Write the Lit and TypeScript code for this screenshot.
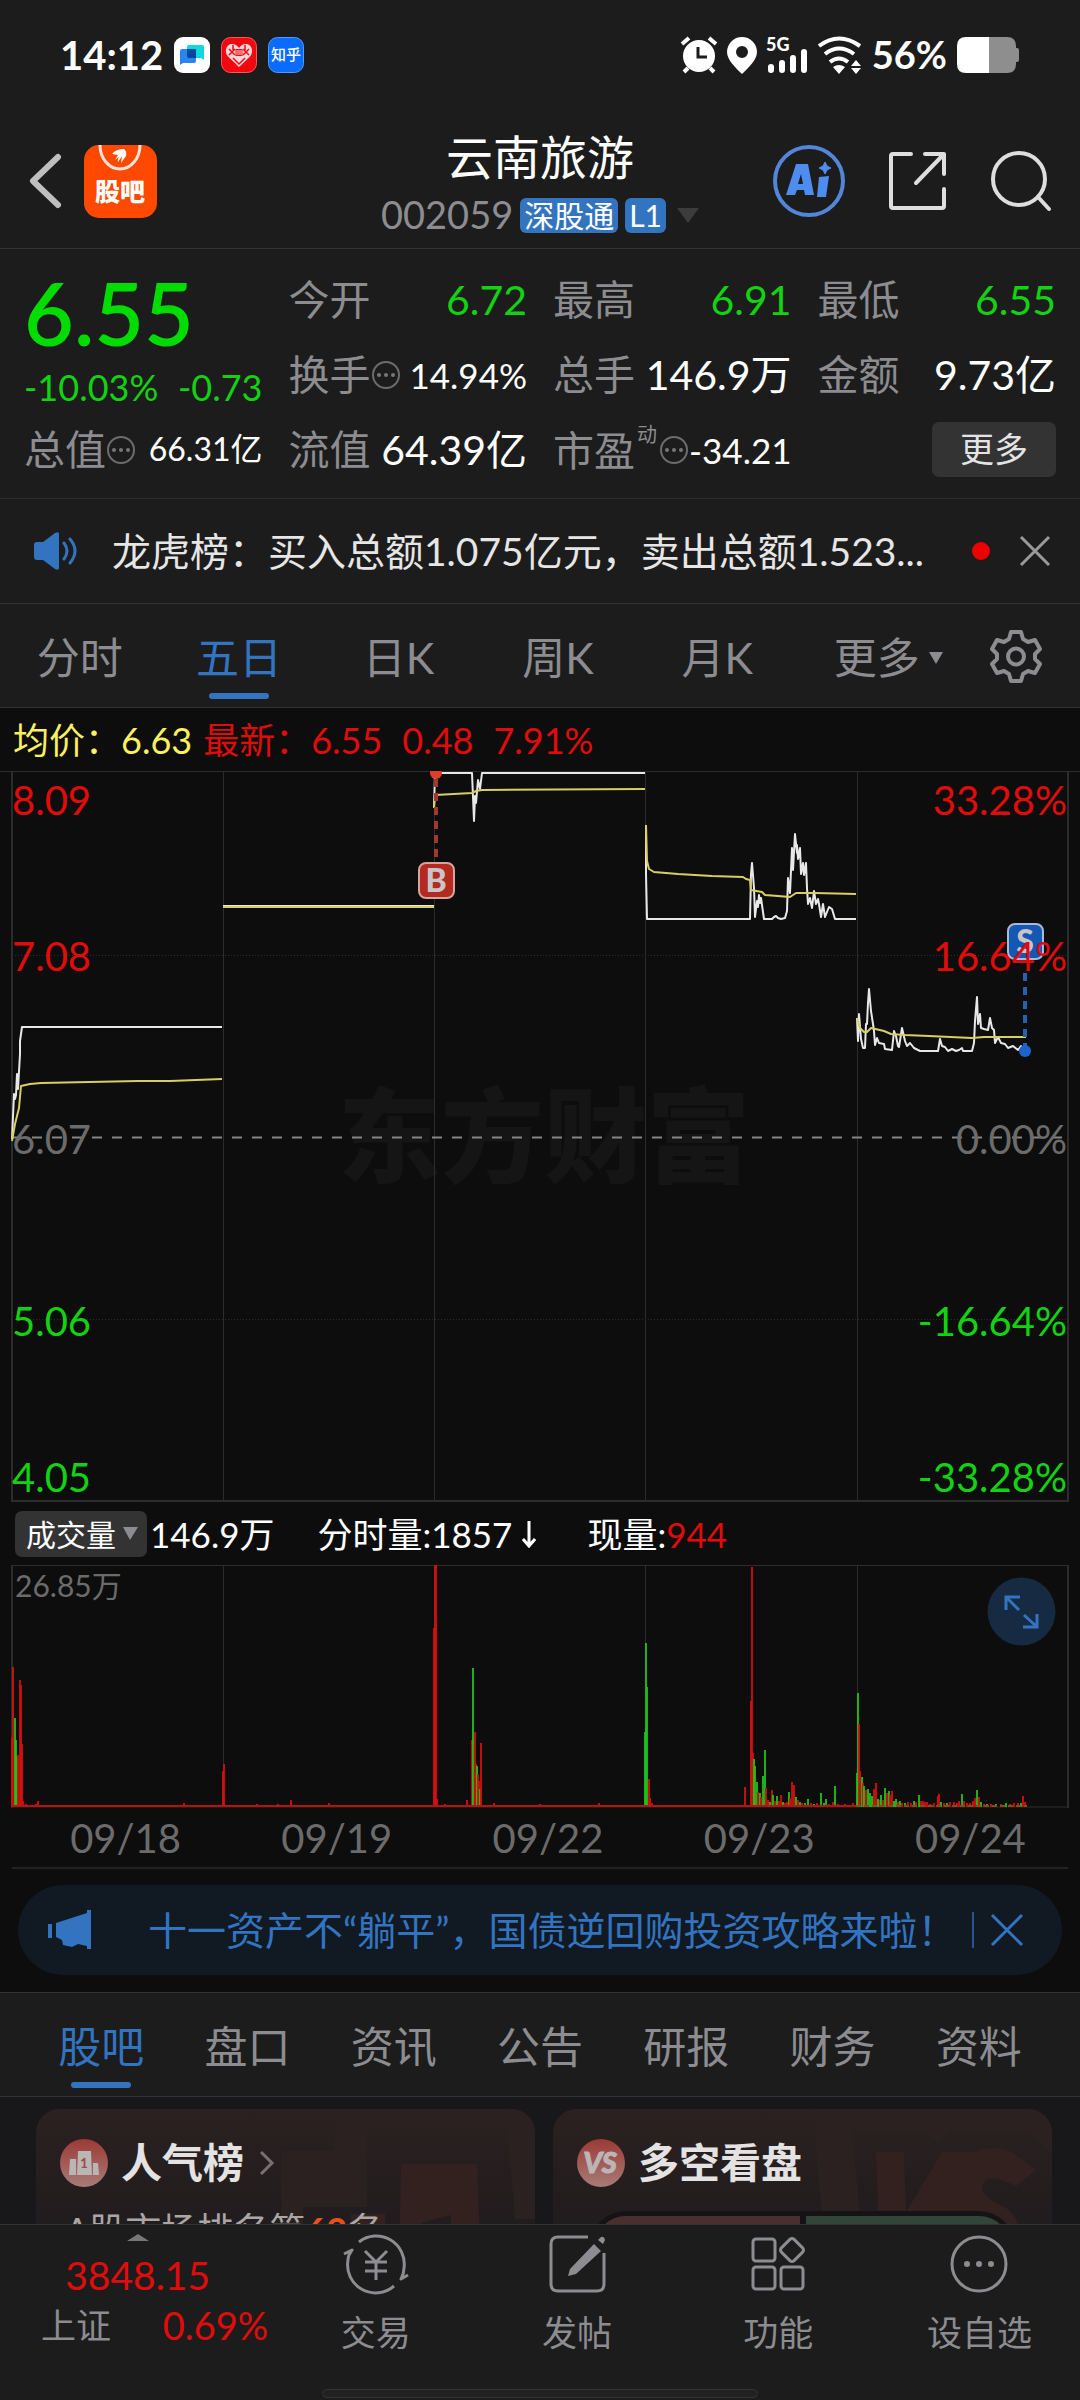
import { LitElement, html, svg, css } from "lit";
import { customElement, state } from "lit/decorators.js";
import { classMap } from "lit/directives/class-map.js";

type Bar = [x: number, height: number, up: 0 | 1];

const PRICE_LINES = [
  "12,368 14,323 15,328 16,324 17,303 18,318 20,283 20,270 22,256 222,256",
  "223,135 434,135",
  "434,37 435,2 472,2 474,50 475,25 476,32 478,9 480,18 482,2 645,2",
  "646,54 646,103 647,148 750,148 751,103 752,92 754,117 755,146 757,130 758,136 759,124 760,132 761,127 763,141 764,148 772,148 774,146 776,145 778,147 781,148 785,147 787,140 788,107 790,122 792,77 793,99 795,63 797,82 797,74 798,88 800,77 801,103 803,92 804,104 806,92 807,117 808,133 810,127 812,137 814,120 816,133 818,128 819,133 821,146 823,133 825,146 829,136 832,138 835,148 856,148",
  "857,247 858,270 859,243 861,268 863,277 865,277 866,253 867,253 868,232 869,218 871,240 873,253 874,260 875,274 877,267 879,272 884,273 885,278 892,279 894,260 896,265 898,275 899,276 902,257 905,270 907,275 910,272 914,277 920,280 938,280 940,268 942,275 945,276 948,280 952,278 956,280 959,279 962,277 963,280 972,280 974,272 975,250 977,226 978,253 980,243 981,257 984,258 988,259 990,247 992,257 994,259 995,272 998,266 1001,272 1005,273 1008,277 1013,275 1018,279 1021,275 1025,280",
];

const AVERAGE_LINES = [
  "12,370 15,353 19,337 21,315 30,313 41,312 138,310 170,310 222,308",
  "223,136 434,136",
  "434,37 435,24 472,22 476,20 482,19 645,18",
  "646,54 647,90 649,98 654,101 678,103 712,105 743,106 746,108 750,109 751,119 762,121 765,124 778,125 790,126 796,122 815,122 856,123",
  "857,247 860,257 864,261 867,261 871,257 884,260 891,263 905,264 929,265 972,267 984,266 1026,266",
];

const BARS: Bar[] = [
  [12, 70, 1], [13, 140, 1], [15, 89, 0], [16, 67, 0], [17, 50, 0], [18, 52, 1], [20, 127, 1], [21, 122, 1], [22, 63, 1], [23, 6, 1],
  [26, 3, 1], [36, 3, 1], [38, 6, 1], [118, 2, 1], [184, 4, 1],
  [223, 36, 1], [224, 43, 1], [257, 3, 1], [278, 3, 1], [291, 7, 1], [329, 4, 1],
  [434, 179, 1], [435, 242, 1], [436, 242, 1], [437, 8, 1], [445, 3, 1], [467, 7, 1],
  [472, 67, 1], [475, 75, 1], [473, 139, 0], [476, 43, 1], [477, 41, 0], [478, 32, 1], [479, 26, 1], [480, 18, 0], [481, 64, 1],
  [494, 4, 1], [540, 3, 1], [599, 4, 1],
  [645, 75, 0], [646, 164, 0], [647, 120, 0], [649, 28, 1], [650, 9, 1], [652, 4, 1], [745, 20, 1],
  [751, 106, 1], [752, 240, 1], [753, 54, 1], [754, 48, 0], [755, 41, 0], [757, 25, 0], [758, 15, 1], [760, 14, 0], [761, 10, 1],
  [763, 31, 0], [765, 57, 0], [766, 19, 1], [768, 7, 1], [770, 5, 0], [772, 17, 1], [773, 12, 0], [775, 6, 1], [777, 11, 0],
  [779, 6, 1], [781, 12, 1], [783, 5, 0], [785, 4, 1], [787, 5, 1], [789, 15, 0], [790, 8, 1], [792, 25, 1], [794, 22, 1], [796, 10, 0],
  [798, 7, 1], [800, 5, 0], [802, 4, 1], [805, 4, 0], [808, 8, 0], [811, 4, 1], [814, 3, 0], [817, 4, 1], [821, 14, 0], [824, 4, 0],
  [826, 8, 0], [829, 3, 1], [833, 5, 1], [835, 21, 0], [838, 3, 1], [845, 3, 1], [853, 4, 1],
  [857, 34, 0], [858, 114, 0], [859, 83, 1], [860, 36, 1], [862, 30, 0], [863, 24, 1], [864, 21, 0], [866, 17, 1], [868, 18, 0],
  [870, 14, 0], [872, 11, 0], [874, 18, 1], [876, 24, 1], [878, 8, 0], [880, 7, 1], [881, 12, 0], [883, 7, 1], [885, 19, 0], [887, 14, 1],
  [889, 16, 0], [890, 12, 1], [892, 16, 1], [894, 6, 0], [896, 8, 0], [898, 5, 1], [900, 6, 0], [902, 4, 1], [905, 4, 0], [908, 5, 1],
  [911, 4, 1], [914, 6, 0], [916, 5, 1], [919, 12, 0], [921, 6, 1], [923, 6, 1], [925, 5, 1], [927, 5, 1], [930, 3, 1], [934, 4, 1],
  [938, 11, 1], [939, 13, 1], [941, 5, 0], [944, 4, 1], [947, 4, 0], [950, 5, 1], [954, 5, 1], [957, 4, 1], [959, 6, 1], [962, 13, 0],
  [964, 6, 1], [967, 4, 1], [970, 4, 1], [973, 6, 1], [975, 9, 1], [977, 17, 0], [979, 10, 1], [981, 5, 0], [984, 3, 1], [987, 3, 0],
  [991, 3, 1], [996, 3, 0], [1001, 3, 1], [1006, 4, 0], [1010, 3, 1], [1014, 4, 1], [1018, 4, 1], [1021, 4, 0], [1023, 11, 1], [1025, 5, 1],
];

const GRID_X = [223, 434, 645, 857];

const sharedStyles = css`
  *,
  *::before,
  *::after {
    box-sizing: border-box;
  }
  button,
  select {
    font: inherit;
    color: inherit;
    background: none;
    border: 0;
    padding: 0;
    margin: 0;
    cursor: pointer;
    appearance: none;
  }
  a {
    color: inherit;
    text-decoration: none;
  }
  svg {
    display: block;
    flex: none;
  }
  .up {
    color: #e00c0c;
  }
  .down {
    color: #12d212;
  }
`;

@customElement("phone-status")
class PhoneStatus extends LitElement {
  static styles = [
    sharedStyles,
    css`
      :host {
        display: flex;
        align-items: center;
        justify-content: space-between;
        height: 110px;
        padding: 0 60px;
        color: #fff;
      }
      .side {
        display: flex;
        align-items: center;
        gap: 11px;
      }
      .status {
        gap: 9px;
      }
      .clock {
        font-size: 40px;
        font-weight: 700;
      }
      .percent {
        font-size: 38px;
        font-weight: 700;
      }
    `,
  ];

  render() {
    return html`
      <div class="side">
        <span class="clock">14:12</span>
        <svg width="36" height="36" viewBox="0 0 36 36">
          <rect width="36" height="36" rx="9" fill="#fff" />
          <path d="M15 8h13a2 2 0 0 1 2 2v13l-3-2H15a2 2 0 0 1-2-2v-9a2 2 0 0 1 2-2z" fill="#0fd9dc" />
          <path d="M8 12h14v12a2 2 0 0 1-2 2H9l-3 2V14a2 2 0 0 1 2-2z" fill="#2a85f2" />
          <path d="M13 12h9v9h-7a2 2 0 0 1-2-2z" fill="#04479c" />
        </svg>
        <svg width="36" height="36" viewBox="0 0 36 36">
          <rect x="0.5" y="0.5" width="35" height="35" rx="9" fill="#f2070f" stroke="#f8575c" />
          <path d="M18 30 6.500 19C3 14 5.500 7 11 7c3.500 0 5.500 2 7 4 1.500-2 3.500-4 7-4 5.500 0 8 7 4.500 12z" fill="#ffd9da" />
          <path d="M8 12l6 6m-6 0 6-6m8 0 6 6m0-6-6 6M12 21l6 6 6-6M12 8v5m12-5v5" stroke="#f2070f" stroke-width="1.500" fill="none" />
          <rect x="14.500" y="12" width="7" height="7" fill="#f2070f" />
          <path d="M16 13v5m2-5v5m2-5v5" stroke="#ffd9da" />
        </svg>
        <svg width="36" height="36" viewBox="0 0 36 36">
          <rect x="0.5" y="0.5" width="35" height="35" rx="9" fill="#0a6cff" stroke="#4f9bff" />
          <text x="18" y="23" font-size="15" font-weight="500" text-anchor="middle" fill="#fff">知乎</text>
        </svg>
      </div>
      <div class="side status">
        <svg width="38" height="38" viewBox="0 0 38 38" fill="none" stroke="#fff" stroke-width="4">
          <circle cx="19" cy="20" r="16" fill="#fff" stroke="none" />
          <path d="M2 8 9 2M36 8 29 2M8 32l-4 4M30 32l4 4" />
          <path d="M18 11v10h9" stroke="#1c1c1c" stroke-width="3" />
        </svg>
        <svg width="30" height="38" viewBox="0 0 30 38">
          <path fill="#fff" fill-rule="evenodd" d="M15 1a15 15 0 0 1 15 15c0 8-9 16-15 22C9 32 0 24 0 16A15 15 0 0 1 15 1zm0 9a6 6 0 1 0 0 12 6 6 0 0 0 0-12z" />
        </svg>
        <svg width="42" height="38" viewBox="0 0 42 38" overflow="visible" stroke="#fff" stroke-width="6" stroke-linecap="round">
          <text x="0" y="15" font-size="18" font-weight="900" fill="#fff" stroke="none">5G</text>
          <path d="M5 31v3M16 27v7M27 22v12M38 16v18" />
        </svg>
        <svg width="46" height="38" viewBox="0 0 46 38" fill="none" stroke="#fff" stroke-width="4">
          <path d="M2 10q20-15 41 0M8 18q14-11 29 0M13 26q9-7 18 0" />
          <path d="m22 38-6-7q6-4 12 0zM39 24l5 6h-10zM39 38l5-6h-10z" fill="#fff" stroke="none" />
        </svg>
        <span class="percent">56%</span>
        <svg width="64" height="38" viewBox="0 0 64 38">
          <path d="M33 1h18q9 0 9 9v2h1q2 0 2 2v10q0 2-2 2h-1v2q0 9-9 9H33z" fill="#8e8e8e" />
          <path d="M33 1H10Q1 1 1 10v18q0 9 9 9h23z" fill="#fff" />
        </svg>
      </div>
    `;
  }
}

@customElement("stock-header")
class StockHeader extends LitElement {
  static styles = [
    sharedStyles,
    css`
      :host {
        display: grid;
        grid-template-columns: 1fr auto 1fr;
        align-items: center;
        height: 139px;
        padding: 4px 28px 0;
        border-bottom: 1px solid #333;
      }
      .left,
      .right,
      .code {
        display: flex;
        align-items: center;
      }
      .left {
        gap: 22px;
      }
      .right {
        justify-content: flex-end;
        gap: 42px;
      }
      .middle {
        padding-top: 8px;
        text-align: center;
      }
      h1 {
        margin: 0;
        font-size: 47px;
        line-height: 60px;
        font-weight: 400;
        color: #fff;
      }
      .code {
        justify-content: center;
        gap: 7px;
        height: 56px;
        font-size: 38px;
        color: #8c8c91;
      }
      .badge {
        height: 35px;
        padding: 0 4px;
        border-radius: 6px;
        background: #3274c0;
        color: #fff;
        font-size: 30px;
        line-height: 34px;
      }
      .caret {
        margin-left: 4px;
      }
    `,
  ];

  render() {
    return html`
      <div class="left">
        <button aria-label="返回">
          <svg width="34" height="56" viewBox="0 0 34 56" fill="none" stroke="#bfbfbf" stroke-width="6" stroke-linecap="round" stroke-linejoin="round">
            <path d="M30 4 5 28l25 24" />
          </svg>
        </button>
        <a href="#guba" aria-label="股吧首页">
          <svg width="73" height="73" viewBox="0 0 73 73">
            <rect width="73" height="73" rx="15" fill="#ff4800" />
            <path d="M16 0a20 24 0 0 0 40 0" fill="none" stroke="#ffe3d8" stroke-width="3" />
            <path d="M28 9q4-5 12-5 3 2 2 7l-5 7 1-7-4 6q-1-3 2-6l-5 4 3-5z" fill="#fff" />
            <text x="36" y="56" font-size="25" font-weight="900" text-anchor="middle" fill="#fff">股吧</text>
          </svg>
        </a>
      </div>
      <div class="middle">
        <h1>云南旅游</h1>
        <div class="code">
          <span>002059</span>
          <span class="badge">深股通</span>
          <span class="badge">L1</span>
          <svg class="caret" width="22" height="15" viewBox="0 0 22 15"><path d="M0 0h22L11 15z" fill="#3c3c3c" /></svg>
        </div>
      </div>
      <div class="right">
        <button aria-label="Ai">
          <svg width="73" height="73" viewBox="0 0 73 73" fill="#4e8cf0">
            <circle cx="36" cy="36" r="34" fill="none" stroke="#5385d8" stroke-width="4" />
            <path fill-rule="evenodd" d="M23 19h12l6 31h-9l-1-5h-7l-2 5h-9zm5 10-3 10h5z" />
            <path d="m46 32 10-1-3 21h-9z" />
            <path d="m52 17 2 4 4 2-4 2-2 4-2-4-4-2 4-2z" stroke="#4e8cf0" stroke-width="1" />
          </svg>
        </button>
        <button aria-label="分享">
          <svg width="60" height="60" viewBox="0 0 60 60" fill="none" stroke="#dedede" stroke-width="4" stroke-linecap="round" stroke-linejoin="round">
            <path d="M23 3H5q-2 0-2 2v50q0 2 2 2h49q2 0 2-2V38M37 3h19v20M56 3 28 32" />
          </svg>
        </button>
        <button aria-label="搜索">
          <svg width="62" height="62" viewBox="0 0 62 62" fill="none" stroke="#dedede" stroke-width="4" stroke-linecap="round">
            <circle cx="29" cy="29" r="26" />
            <path d="m48 47 11 12" />
          </svg>
        </button>
      </div>
    `;
  }
}

const infoIcon = html`<svg width="30" height="30" viewBox="0 0 30 30">
  <circle cx="15" cy="15" r="13" fill="none" stroke="#6c6c6e" stroke-width="2" />
  <circle cx="8" cy="15" r="2" fill="#77777a" /><circle cx="15" cy="15" r="2" fill="#77777a" /><circle cx="22" cy="15" r="2" fill="#77777a" />
</svg>`;

@customElement("stock-quote")
class StockQuote extends LitElement {
  static styles = [
    sharedStyles,
    css`
      :host {
        display: grid;
        grid-template-columns: repeat(4, 1fr);
        grid-auto-rows: 75px;
        column-gap: 26px;
        padding: 13px 24px 11px;
        border-bottom: 1px solid #2c2c2c;
      }
      .headline {
        grid-row: span 2;
        display: flex;
        flex-direction: column;
      }
      .price {
        font-size: 86px;
        line-height: 102px;
        font-weight: 600;
        color: #00db00;
      }
      .change {
        display: flex;
        justify-content: space-between;
        font-size: 36px;
        line-height: 46px;
      }
      .cell {
        display: flex;
        align-items: center;
        white-space: nowrap;
      }
      .label {
        font-size: 41px;
        color: #8c8c91;
      }
      .label sup {
        font-size: 20px;
        line-height: 20px;
        vertical-align: 24px;
        margin: 0 2px;
      }
      .value {
        margin-left: auto;
        font-size: 41px;
        color: #fff;
      }
      .value.small {
        font-size: 35px;
      }
      .value.tiny {
        font-size: 32px;
      }
      .value.down {
        color: #12d212;
      }
      .more {
        align-self: center;
        justify-self: end;
        width: 124px;
        height: 55px;
        border-radius: 7px;
        background: #333;
        color: #e4e4e4;
        font-size: 34px;
      }
    `,
  ];

  private cell(label: string, value: string, tone = "", info = false, sup = "") {
    return html`<div class="cell">
      <span class="label">${label}${sup ? html`<sup>${sup}</sup>` : ""}</span>${info ? infoIcon : ""}
      <span class="value ${tone}">${value}</span>
    </div>`;
  }

  render() {
    return html`
      <div class="headline">
        <span class="price">6.55</span>
        <span class="change down"><span>-10.03%</span><span>-0.73</span></span>
      </div>
      ${this.cell("今开", "6.72", "down")} ${this.cell("最高", "6.91", "down")} ${this.cell("最低", "6.55", "down")}
      ${this.cell("换手", "14.94%", "small", true)} ${this.cell("总手", "146.9万")} ${this.cell("金额", "9.73亿")}
      ${this.cell("总值", "66.31亿", "tiny", true)} ${this.cell("流值", "64.39亿")}
      ${this.cell("市盈", "-34.21", "small", true, "动")}
      <button class="more">更多</button>
    `;
  }
}

@customElement("news-ticker")
class NewsTicker extends LitElement {
  static styles = [
    sharedStyles,
    css`
      :host {
        display: flex;
        align-items: center;
        height: 105px;
        padding: 0 28px 0 33px;
        border-bottom: 1px solid #333;
      }
      a {
        flex: 1;
        margin-left: 33px;
        font-size: 39px;
        color: #e6e6e6;
        white-space: nowrap;
      }
      .dot {
        width: 18px;
        height: 18px;
        margin-right: 28px;
        border-radius: 50%;
        background: #ec0000;
      }
    `,
  ];

  render() {
    return html`
      <svg width="46" height="38" viewBox="0 0 46 38">
        <path d="M1 13q0-3 3-3h6L22 1q4-2 4 1v34q0 3-4 1l-12-9H4q-3 0-3-3z" fill="#3274c0" />
        <path d="M31 11q6 8 0 16M37 7q10 12 0 24" fill="none" stroke="#3274c0" stroke-width="3" stroke-linecap="round" />
      </svg>
      <a href="#longhu">龙虎榜：买入总额1.075亿元，卖出总额1.523...</a>
      <span class="dot"></span>
      <button aria-label="关闭">
        <svg width="34" height="34" viewBox="0 0 34 34" stroke="#9a9a9a" stroke-width="3"><path d="m3 3 28 28M31 3 3 31" /></svg>
      </button>
    `;
  }
}

@customElement("period-tabs")
class PeriodTabs extends LitElement {
  @state() private active = "五日";

  static styles = [
    sharedStyles,
    css`
      :host {
        display: grid;
        grid-template-columns: repeat(6, 4fr) 3fr;
        height: 104px;
        padding-right: 4px;
        border-bottom: 1px solid #333;
        color: #8c8c91;
        font-size: 43px;
      }
      .tab {
        display: flex;
        flex-direction: column;
        align-items: center;
        justify-content: space-between;
        padding: 23px 0 8px;
        line-height: 62px;
      }
      .tab::after {
        content: "";
        width: 60px;
        height: 6px;
        border-radius: 3px;
      }
      .tab.active {
        color: #3274c0;
      }
      .tab.active::after {
        background: #3274c0;
      }
      .text {
        display: flex;
        align-items: center;
        gap: 9px;
      }
      .text svg {
        margin-right: -23px;
      }
      .gear {
        display: grid;
        place-items: center;
      }
    `,
  ];

  render() {
    const tabs = ["分时", "五日", "日K", "周K", "月K", "更多"];
    return html`
      ${tabs.map(
        (name) => html`<button class=${classMap({ tab: true, active: name === this.active })} @click=${() => (this.active = name)}>
          <span class="text">${name}${name === "更多"
            ? html`<svg width="14" height="12" viewBox="0 0 14 12"><path d="M0 0h14L7 12z" fill="#8c8c91" /></svg>`
            : ""}</span>
        </button>`
      )}
      <button class="gear" aria-label="设置">
        <svg width="54" height="54" viewBox="0 0 54 54" fill="none" stroke="#8c8c91" stroke-width="4" stroke-linejoin="round">
          <path d="M22 3h10l2 7 5 3 7-2 5 9-5 5v5l5 5-5 9-7-2-5 3-2 7H22l-2-7-5-3-7 2-5-9 5-5v-5l-5-5 5-9 7 2 5-3z" />
          <circle cx="27" cy="27.500" r="8" />
        </svg>
      </button>
    `;
  }
}

@customElement("stock-chart")
class StockChart extends LitElement {
  static styles = [
    sharedStyles,
    css`
      :host {
        display: block;
        background: #0d0d0d;
      }
      .legend {
        display: flex;
        align-items: center;
        height: 63px;
        padding: 3px 0 0 13px;
        font-size: 36px;
        white-space: pre;
        gap: 11px;
      }
      .legend .average {
        color: #fbf05f;
      }
      .legend .latest {
        display: flex;
        gap: 20px;
      }
      .plot {
        width: 100%;
        height: auto;
      }
      .plot text {
        font-size: 40px;
      }
      .plot .watermark {
        font-size: 103px;
        font-weight: 900;
        fill: #151515;
      }
      .plot .marker {
        font-size: 32px;
        font-weight: 900;
      }
      .plot .scale {
        font-size: 30px;
        fill: #6b6b6b;
      }
      .volume {
        display: flex;
        align-items: center;
        height: 63px;
        padding-left: 15px;
        font-size: 35px;
        color: #fff;
        white-space: nowrap;
      }
      .picker {
        display: grid;
        align-items: center;
        width: 132px;
        height: 46px;
        margin-right: 3px;
        border-radius: 7px;
        background: #333;
        font-size: 30px;
      }
      .picker select,
      .picker svg {
        grid-area: 1 / 1;
      }
      .picker select {
        padding-left: 11px;
        line-height: 46px;
        height: 46px;
      }
      .picker svg {
        justify-self: end;
        margin-right: 9px;
        pointer-events: none;
      }
      .minute {
        display: flex;
        align-items: center;
        gap: 10px;
        margin: 0 51px 0 43px;
      }
      .volume-plot {
        position: relative;
      }
      .expand {
        position: absolute;
        top: 12px;
        right: 24px;
      }
      .dates {
        display: grid;
        grid-template-columns: repeat(5, 1fr);
        height: 61px;
        margin: 0 12px;
        border-bottom: 2px solid #222;
        font-size: 40px;
        line-height: 61px;
        text-align: center;
        color: #6b6b6b;
      }
      .dates span {
        padding-left: 16px;
      }
    `,
  ];

  private marker(x: number, y: number, letter: string, fill: string, edge: string) {
    return svg`<rect x=${x - 17} y=${y} width="35" height="35" rx="7" fill=${fill} stroke=${edge} stroke-width="2" />
      <text class="marker" x=${x} y=${y + 29} text-anchor="middle" fill="#c9c4ca">${letter}</text>`;
  }

  render() {
    const red = "#e00c0c";
    const green = "#12d212";
    const gray = "#6b6b6b";
    const scale: [string, string, number, string][] = [
      ["8.09", "33.28%", 44, red],
      ["7.08", "16.64%", 200, red],
      ["6.07", "0.00%", 383, gray],
      ["5.06", "-16.64%", 565, green],
      ["4.05", "-33.28%", 721, green],
    ];
    return html`
      <div class="legend">
        <span class="average">均价：6.63</span>
        <span class="latest up"><span>最新：6.55</span><span>0.48</span><span>7.91%</span></span>
      </div>
      <svg class="plot" viewBox="0 0 1080 731" role="img" aria-label="五日走势">
        <text class="watermark" x="544" y="404" text-anchor="middle">东方财富</text>
        <g stroke="#2c2c2c" fill="none">
          ${GRID_X.map((x) => svg`<path d="M${x + 0.5} 0V730" />`)}
          <path d="M12 0V731M1068 0V731M12 730H1068" stroke-width="2" />
          <path d="M0 0.500H1080" />
          <path d="M12 184.500H1068M12 548.500H1068" stroke-dasharray="1 2" />
        </g>
        <path d="M12 366.500H1068" stroke="#858585" stroke-width="2" stroke-dasharray="10 10" />
        <g fill="none" stroke-width="2" stroke-linejoin="round">
          ${PRICE_LINES.map((points) => svg`<polyline points=${points} stroke="#e8e8e8" />`)}
          ${AVERAGE_LINES.map((points) => svg`<polyline points=${points} stroke="#d8cf62" />`)}
        </g>
        <g stroke-width="4" stroke-dasharray="8 6">
          <path d="M436 8V92" stroke="#a23a2c" />
          <path d="M1025 202V276" stroke="#2760ad" />
        </g>
        <circle cx="436" cy="2" r="6" fill="#dd4027" />
        <circle cx="1025" cy="280" r="6" fill="#1c64cc" />
        ${this.marker(436, 92, "B", "#b32b1f", "#d9a29c")} ${this.marker(1025, 153, "S", "#1557b4", "#a9bad6")}
        ${scale.map(
          ([price, percent, y, fill]) => svg`<text x="12" y=${y} fill=${fill}>${price}</text>
            <text x="1067" y=${y} fill=${fill} text-anchor="end">${percent}</text>`
        )}
      </svg>
      <div class="volume">
        <label class="picker">
          <select aria-label="指标">
            <option>成交量</option>
          </select>
          <svg width="15" height="13" viewBox="0 0 15 13"><path d="M0 0h15L7 13z" fill="#8c8c91" /></svg>
        </label>
        <span>146.9万</span>
        <span class="minute">分时量:1857<svg width="14" height="28" viewBox="0 0 14 28" fill="none" stroke="#fff" stroke-width="3"><path d="M7 1v24M1 19l6 7 6-7" /></svg></span>
        <span>现量:<span class="up">944</span></span>
      </div>
      <div class="volume-plot">
        <svg class="plot" viewBox="0 0 1080 243" role="img" aria-label="成交量">
          <g stroke="#2c2c2c" fill="none">
            ${GRID_X.map((x) => svg`<path d="M${x + 0.5} 0V242" />`)}
            <path d="M12 0.500H1068M12 242H1068" />
            <path d="M12 0V243M1068 0V243" stroke-width="2" />
          </g>
          ${BARS.map(
            ([x, height, up]) =>
              svg`<rect x=${x - 1} y=${242 - height} width="2" height=${height} fill=${up ? "#d4100e" : "#1fc31a"} fill-opacity="0.900" />`
          )}
          <path d="M12 241H856" stroke="#b51414" stroke-width="2" />
          <path d="M856 241H1027" stroke="#8a4a10" stroke-width="2" stroke-dasharray="5 3" />
          <text class="scale" x="15" y="32">26.85万</text>
        </svg>
        <button class="expand" aria-label="全屏">
          <svg width="69" height="69" viewBox="0 0 69 69" fill="none" stroke="#3274c0" stroke-width="3">
            <circle cx="34.500" cy="34.500" r="34" fill="#162a41" stroke="none" />
            <path d="M19 33V20h14M20 21l12 12M50 37v13H36M49 49 37 38" />
          </svg>
        </button>
      </div>
      <div class="dates">${["09/18", "09/19", "09/22", "09/23", "09/24"].map((d) => html`<span>${d}</span>`)}</div>
    `;
  }
}

@customElement("promo-banner")
class PromoBanner extends LitElement {
  static styles = [
    sharedStyles,
    css`
      :host {
        display: block;
        padding: 16px 18px 17px;
        background: #0d0d0d;
      }
      .pill {
        display: flex;
        align-items: center;
        height: 90px;
        padding: 0 38px 0 28px;
        border-radius: 45px;
        background: #111922;
        color: #3274c0;
        font-size: 39px;
        white-space: nowrap;
      }
      a {
        flex: 1;
        margin-left: 54px;
      }
      button {
        padding-left: 16px;
        border-left: 2px solid #28568c;
      }
    `,
  ];

  render() {
    return html`<div class="pill">
      <svg width="48" height="40" viewBox="0 0 48 40" fill="#3274c0">
        <path d="M2 14h4v14H2zM10 13 41 3V0h4v39h-4v-3l-9-2-6 3-9-2-1-5-6-3z" />
      </svg>
      <a href="#promo">十一资产不“躺平”，国债逆回购投资攻略来啦！</a>
      <button aria-label="关闭">
        <svg width="34" height="36" viewBox="0 0 34 36" stroke="#3274c0" stroke-width="3"><path d="m2 3 30 30M32 3 2 33" /></svg>
      </button>
    </div>`;
  }
}

@customElement("section-tabs")
class SectionTabs extends LitElement {
  @state() private active = "股吧";

  static styles = [
    sharedStyles,
    css`
      :host {
        display: grid;
        grid-template-columns: repeat(7, 1fr);
        height: 105px;
        padding: 0 28px;
        border-top: 1px solid #333;
        border-bottom: 1px solid #333;
        background: #1c1c1c;
        color: #8c8c91;
        font-size: 43px;
      }
      .tab {
        display: flex;
        flex-direction: column;
        align-items: center;
        justify-content: space-between;
        padding: 23px 0 8px;
        line-height: 62px;
      }
      .tab::after {
        content: "";
        width: 60px;
        height: 6px;
        border-radius: 3px;
      }
      .tab.active {
        color: #3274c0;
      }
      .tab.active::after {
        background: #3274c0;
      }
    `,
  ];

  render() {
    const tabs = ["股吧", "盘口", "资讯", "公告", "研报", "财务", "资料"];
    return html`${tabs.map(
      (name) => html`<button class=${classMap({ tab: true, active: name === this.active })} @click=${() => (this.active = name)}>${name}</button>`
    )}`;
  }
}

@customElement("community-cards")
class CommunityCards extends LitElement {
  static styles = [
    sharedStyles,
    css`
      :host {
        display: grid;
        grid-template-columns: 1fr 1fr;
        gap: 18px;
        padding: 12px 28px 12px 36px;
        background: #18181a;
      }
      .card {
        display: grid;
        align-content: start;
        height: 230px;
        border-radius: 24px;
        background: linear-gradient(#2b2120, #211c1e 110px);
        overflow: hidden;
      }
      .art,
      .body {
        grid-area: 1 / 1;
      }
      .art {
        justify-self: end;
      }
      .body {
        padding: 24px 24px 0;
      }
      .title {
        display: flex;
        align-items: center;
        height: 60px;
        gap: 13px;
      }
      h2 {
        margin: 0;
        font-size: 41px;
        line-height: 60px;
        font-weight: 600;
        color: #e4e2e2;
      }
      .rank {
        margin: 10px 0 0 5px;
        font-size: 36px;
        line-height: 54px;
        color: #aaa6a6;
        white-space: nowrap;
      }
      .rank b {
        font-weight: 700;
        color: #e8501f;
      }
      .versus {
        display: flex;
        gap: 6px;
        margin: 18px 13px 0;
        height: 72px;
        padding: 5px;
        border-radius: 36px;
        background: #151315;
      }
      .bull,
      .bear {
        flex: 1;
      }
      .bull {
        border-radius: 31px 0 0 31px;
        background: #49302e;
      }
      .bear {
        border-radius: 0 31px 31px 0;
        background: #314539;
      }
    `,
  ];

  render() {
    return html`
      <article class="card">
        <svg class="art" width="260" height="150" viewBox="0 0 260 150">
          <path d="M60 0h200v110h-20l-8-92H92v80H28v52H6V42h54z" fill="#2b2120" />
          <path d="M126 55h76l4 95h-30v-44l-30 8v36h-22zM76 105h34v45H76z" fill="#33211f" />
        </svg>
        <div class="body">
          <div class="title">
            <svg width="48" height="48" viewBox="0 0 48 48">
              <defs>
                <linearGradient id="rank-fill" x1="0" y1="0" x2="0" y2="1"><stop offset="0" stop-color="#9c3a36" /><stop offset="1" stop-color="#a87b76" /></linearGradient>
              </defs>
              <circle cx="24" cy="24" r="24" fill="url(#rank-fill)" />
              <path d="M18 12h13l1 24H17zM10 20h6v16H9zM33 24h5l1 12h-6z" fill="#bab6b6" />
              <text x="24" y="29" font-size="13" font-weight="900" text-anchor="middle" fill="#a04d48">1</text>
            </svg>
            <h2>人气榜</h2>
            <svg width="18" height="26" viewBox="0 0 18 26" fill="none" stroke="#777172" stroke-width="3"><path d="m4 2 11 11L4 24" /></svg>
          </div>
          <p class="rank">A股市场排名第<b>62</b>名</p>
        </div>
      </article>
      <article class="card">
        <svg class="art" width="240" height="150" viewBox="0 0 240 150">
          <path d="M0 0h240v44l-18-16-20-8h-60l-16 14-16-14H40l12 130H14z" fill="#2b2120" />
          <path d="M64 43h28l2 60 36-60h32q18-8 38 0l24 18-20 16q-32-16-34 2 2 10 24 20 20 14 12 51h-72l6-14 26 8q10-4 4-10l-24-24-26 40H68z" fill="#33211f" />
        </svg>
        <div class="body">
          <div class="title">
            <svg width="48" height="48" viewBox="0 0 48 48">
              <defs>
                <linearGradient id="vs-fill" x1="0" y1="0" x2="0" y2="1"><stop offset="0" stop-color="#9c3a36" /><stop offset="1" stop-color="#a87b76" /></linearGradient>
              </defs>
              <circle cx="24" cy="24" r="24" fill="url(#vs-fill)" />
              <text x="23" y="34" font-size="29" font-weight="900" font-style="italic" text-anchor="middle" fill="#bab6b6" stroke="#bab6b6" stroke-width="1">VS</text>
            </svg>
            <h2>多空看盘</h2>
          </div>
          <div class="versus"><span class="bull"></span><span class="bear"></span></div>
        </div>
      </article>
    `;
  }
}

@customElement("bottom-bar")
class BottomBar extends LitElement {
  static styles = [
    sharedStyles,
    css`
      :host {
        display: block;
        border-top: 1px solid #333;
        background: #1c1c1c;
        color: #8c8c91;
      }
      nav {
        display: grid;
        grid-template-columns: 275fr repeat(4, 201fr);
        height: 164px;
        font-size: 35px;
      }
      .index {
        display: flex;
        flex-direction: column;
        align-items: center;
        padding-top: 9px;
      }
      .points {
        font-size: 39px;
        line-height: 50px;
        margin-top: 9px;
      }
      .row {
        display: flex;
        align-items: center;
        align-self: stretch;
        justify-content: space-between;
        padding: 0 7px 0 41px;
        line-height: 50px;
      }
      .row .up {
        font-size: 38px;
      }
      .item {
        display: flex;
        flex-direction: column;
        align-items: center;
        gap: 14px;
        padding-top: 10px;
        line-height: 50px;
      }
      .home {
        width: 436px;
        max-width: 60%;
        height: 9px;
        margin: 0 auto 2px;
        border: 1px solid #343434;
        border-radius: 5px;
        background: #212121;
      }
    `,
  ];

  render() {
    const icons = {
      交易: svg`<path d="M12 7A28 28 0 0 1 57 33Q57 39 54 44l7-4M47 51A28 28 0 0 1 1 25Q1 20 5 15l-8 4" />
        <path d="m18 16 11 11 11-11M18 27h22M18 36h22M29 27v18" />`,
      发帖: svg`<path d="M40 2H10Q3 2 3 9v40q0 7 7 7h39q7 0 7-7V18" />
        <path d="m46 9 7 7-25 23-8 2 2-7zM50 5l3-3q3-1 4 3l-2 4z" fill="#8c8c91" stroke="none" />`,
      功能: svg`<rect x="4" y="4" width="22" height="22" rx="3" /><rect x="4" y="32" width="22" height="22" rx="3" /><rect x="32" y="32" width="22" height="22" rx="3" />
        <rect x="34" y="6" width="18" height="18" rx="3" transform="rotate(45 43 15)" />`,
      设自选: svg`<circle cx="29" cy="29" r="27" /><g fill="#8c8c91" stroke="none"><circle cx="17" cy="29" r="3" /><circle cx="29" cy="29" r="3" /><circle cx="41" cy="29" r="3" /></g>`,
    };
    return html`
      <nav>
        <a class="index" href="#index">
          <svg width="22" height="7" viewBox="0 0 22 7"><path d="M11 0 22 7H0z" fill="#77777a" /></svg>
          <span class="points up">3848.15</span>
          <span class="row"><span>上证</span><span class="up">0.69%</span></span>
        </a>
        ${Object.entries(icons).map(
          ([name, icon]) => html`<button class="item">
            <svg width="58" height="58" viewBox="0 0 58 58" fill="none" stroke="#8c8c91" stroke-width="3" stroke-linejoin="round" overflow="visible">${icon}</svg>
            ${name}
          </button>`
        )}
      </nav>
      <div class="home"></div>
    `;
  }
}

@customElement("app-root")
class AppRoot extends LitElement {
  static styles = [
    sharedStyles,
    css`
      :host {
        display: flex;
        flex-direction: column;
        height: 100vh;
        background: #1c1c1c;
        color: #fff;
        font-family: Lato, "Noto Sans CJK SC", sans-serif;
        line-height: 1.2;
      }
      main {
        flex: 1;
        min-height: 0;
        overflow: hidden auto;
        scrollbar-width: none;
      }
    `,
  ];

  render() {
    return html`
      <phone-status></phone-status>
      <stock-header></stock-header>
      <main>
        <stock-quote></stock-quote>
        <news-ticker></news-ticker>
        <period-tabs></period-tabs>
        <stock-chart></stock-chart>
        <promo-banner></promo-banner>
        <section-tabs></section-tabs>
        <community-cards></community-cards>
      </main>
      <bottom-bar></bottom-bar>
    `;
  }
}
